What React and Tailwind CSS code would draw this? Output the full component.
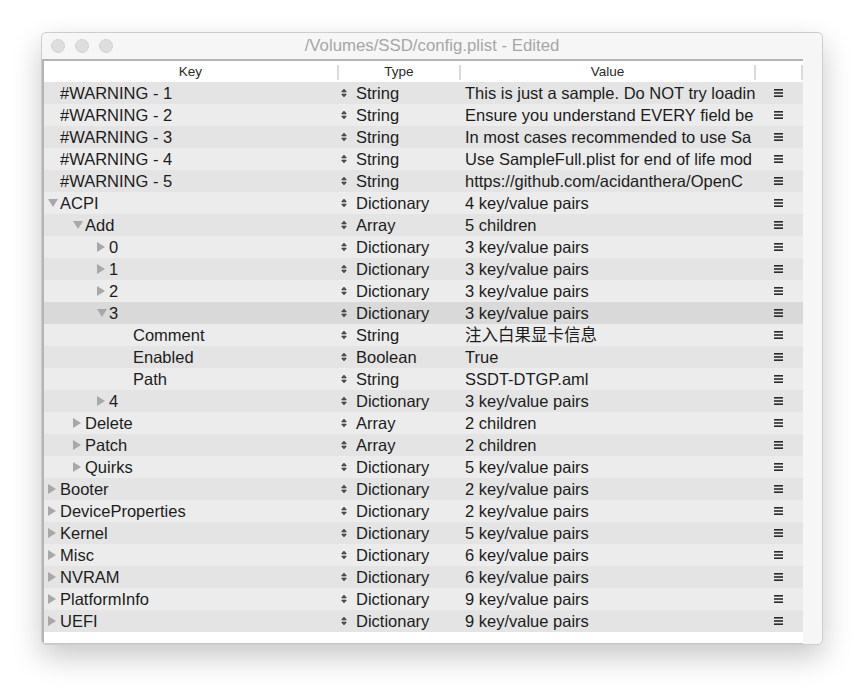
import React from 'react';

const rows = [
  { k: '#WARNING - 1', lvl: 0, t: 'String', v: 'This is just a sample. Do NOT try loadin' },
  { k: '#WARNING - 2', lvl: 0, t: 'String', v: 'Ensure you understand EVERY field be' },
  { k: '#WARNING - 3', lvl: 0, t: 'String', v: 'In most cases recommended to use Sa' },
  { k: '#WARNING - 4', lvl: 0, t: 'String', v: 'Use SampleFull.plist for end of life mod' },
  { k: '#WARNING - 5', lvl: 0, t: 'String', v: 'https://github.com/acidanthera/OpenC' },
  { k: 'ACPI', lvl: 0, tri: 'open', t: 'Dictionary', v: '4 key/value pairs' },
  { k: 'Add', lvl: 1, tri: 'open', t: 'Array', v: '5 children' },
  { k: '0', lvl: 2, tri: 'closed', t: 'Dictionary', v: '3 key/value pairs' },
  { k: '1', lvl: 2, tri: 'closed', t: 'Dictionary', v: '3 key/value pairs' },
  { k: '2', lvl: 2, tri: 'closed', t: 'Dictionary', v: '3 key/value pairs' },
  { k: '3', lvl: 2, tri: 'open', t: 'Dictionary', v: '3 key/value pairs', sel: true },
  { k: 'Comment', lvl: 3, t: 'String', v: '注入白果显卡信息' },
  { k: 'Enabled', lvl: 3, t: 'Boolean', v: 'True' },
  { k: 'Path', lvl: 3, t: 'String', v: 'SSDT-DTGP.aml' },
  { k: '4', lvl: 2, tri: 'closed', t: 'Dictionary', v: '3 key/value pairs' },
  { k: 'Delete', lvl: 1, tri: 'closed', t: 'Array', v: '2 children' },
  { k: 'Patch', lvl: 1, tri: 'closed', t: 'Array', v: '2 children' },
  { k: 'Quirks', lvl: 1, tri: 'closed', t: 'Dictionary', v: '5 key/value pairs' },
  { k: 'Booter', lvl: 0, tri: 'closed', t: 'Dictionary', v: '2 key/value pairs' },
  { k: 'DeviceProperties', lvl: 0, tri: 'closed', t: 'Dictionary', v: '2 key/value pairs' },
  { k: 'Kernel', lvl: 0, tri: 'closed', t: 'Dictionary', v: '5 key/value pairs' },
  { k: 'Misc', lvl: 0, tri: 'closed', t: 'Dictionary', v: '6 key/value pairs' },
  { k: 'NVRAM', lvl: 0, tri: 'closed', t: 'Dictionary', v: '6 key/value pairs' },
  { k: 'PlatformInfo', lvl: 0, tri: 'closed', t: 'Dictionary', v: '9 key/value pairs' },
  { k: 'UEFI', lvl: 0, tri: 'closed', t: 'Dictionary', v: '9 key/value pairs' },
];

// indent per outline level (triangle slot starts here)
const indent = ['pl-[4px]', 'pl-[29px]', 'pl-[53px]', 'pl-[77px]'];

function Triangle({ state }) {
  if (state === 'open') {
    return (
      <svg width="10" height="8" viewBox="0 0 10 8" className="block">
        <path d="M0 0 H10 L5 8 Z" fill="#a8a8a8" />
      </svg>
    );
  }
  if (state === 'closed') {
    return (
      <svg width="8" height="10" viewBox="0 0 8 10" className="block">
        <path d="M0 0 V10 L8 5 Z" fill="#a8a8a8" />
      </svg>
    );
  }
  return null;
}

function UpDown() {
  return (
    <svg width="6" height="10" viewBox="0 0 6 10" className="block">
      <path d="M0.8 3.8 L3 1.2 L5.2 3.8 Z M0.8 6.2 L3 8.8 L5.2 6.2 Z" stroke="#333" strokeWidth="0.9" fill="#555" strokeLinejoin="round" />
    </svg>
  );
}

function MenuIcon() {
  return (
    <svg width="9" height="8" viewBox="0 0 9 8" className="block">
      <rect x="0" y="0" width="9" height="1.6" fill="#2a2a2a" />
      <rect x="0" y="3.2" width="9" height="1.6" fill="#2a2a2a" />
      <rect x="0" y="6.4" width="9" height="1.6" fill="#2a2a2a" />
    </svg>
  );
}

function Sep() {
  return <div className="w-[2px] h-[15px] bg-[#dadada]" />;
}

export default function App() {
  return (
    <div className="w-[866px] h-[697px] bg-white pt-[32px] pl-[41px] font-['Liberation_Sans','Noto_Sans_CJK_SC',sans-serif] text-[#1c1c1c]">
      <div className="w-[782px] h-[613px] rounded-[5px] border border-[#cdcdcd] bg-[#f6f6f6] shadow-[0_12px_30px_rgba(0,0,0,0.22)] flex flex-col overflow-hidden">
        {/* title bar */}
        <div className="h-[26px] relative flex items-center pl-[9px] gap-[10px] shrink-0">
          <div className="w-[14px] h-[14px] rounded-full bg-[#dedede] border border-[#d2d2d2]" />
          <div className="w-[14px] h-[14px] rounded-full bg-[#dedede] border border-[#d2d2d2]" />
          <div className="w-[14px] h-[14px] rounded-full bg-[#dedede] border border-[#d2d2d2]" />
          <div className="absolute inset-0 flex items-center justify-center text-[16.8px] text-[#a6a6a6] pointer-events-none">
            /Volumes/SSD/config.plist - Edited
          </div>
        </div>

        <div className="flex flex-1 min-h-0">
          {/* outline table */}
          <div className="w-[761px] flex flex-col border-t-2 border-l-2 border-b border-[#b4b4b4] border-b-[#c8c8c8] bg-white">
            <div className="h-[21px] pt-[2px] flex items-center text-[13.5px] text-[#2a2a2a] bg-white shrink-0">
              <div className="w-[293px] text-center">Key</div>
              <Sep />
              <div className="w-[120px] text-center">Type</div>
              <Sep />
              <div className="w-[293px] text-center">Value</div>
              <Sep />
              <div className="w-[45px]" />
              <Sep />
            </div>
            {rows.map((r, i) => (
              <div
                key={i}
                className={`h-[22px] flex items-center text-[16.5px] leading-none whitespace-nowrap ${
                  r.sel ? 'bg-[#d9d9d9]' : i % 2 === 0 ? 'bg-[#e4e4e4]' : 'bg-[#ececec]'
                }`}
              >
                <div className={`w-[293px] flex items-center ${indent[r.lvl]}`}>
                  <div className="w-[12px] flex items-center">
                    <Triangle state={r.tri} />
                  </div>
                  <span>{r.k}</span>
                </div>
                <div className="w-[122px] flex items-center pl-[4px]">
                  <UpDown />
                  <span className="ml-[9px]">{r.t}</span>
                </div>
                <div className="w-[295px] pl-[6px]">{r.v}</div>
                <div className="w-[47px] flex items-center pl-[20px]">
                  <MenuIcon />
                </div>
              </div>
            ))}
            <div className="flex-1 bg-white" />
          </div>
          {/* right strip */}
          <div className="flex-1" />
        </div>
      </div>
    </div>
  );
}
